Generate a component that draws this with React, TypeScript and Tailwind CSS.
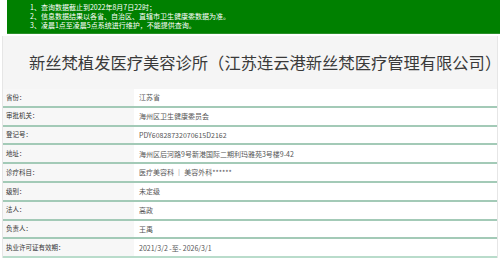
const NOTICES = [
  '1、查询数据截止到2022年8月7日22时；',
  '2、信息数据结果以各省、自治区、直辖市卫生健康委数据为准。',
  '3、凌晨1点至凌晨5点系统进行维护，不能提供查询。',
];

const ROWS = [
  { label: '省份：', value: '江苏省' },
  { label: '审批机关：', value: '海州区卫生健康委员会' },
  { label: '登记号：', value: 'PDY60828732070615D2162' },
  { label: '地址：', value: '海州区后河路9号新港国际二期利玛雅苑3号楼9-42' },
  { label: '诊疗科目：', value: '医疗美容科 ｜ 美容外科******' },
  { label: '级别：', value: '未定级' },
  { label: '法人：', value: '高政' },
  { label: '负责人：', value: '王禹' },
  { label: '执业许可证有效期：', value: '2021/3/2 -至- 2026/3/1' },
];

export default function App() {
  return (
    <div
      className="w-[500px] h-[259px] overflow-hidden bg-white text-[#333]"
      style={{ fontFamily: '"Noto Sans CJK SC", "Noto Sans", sans-serif' }}
    >
      {/* notice banner */}
      <div className="ml-[7px] h-[34px] bg-[#008000] pl-[23px] pt-[3px] border-b border-[#2a8f2a]">
        {NOTICES.map((n) => (
          <p key={n} className="text-[7px] leading-[9px] text-white">{n}</p>
        ))}
      </div>

      <div className="mt-[2px] mx-[2px] border-x border-[#e6e6e6] bg-[#f5f5f5]">
        {/* title */}
        <div className="h-[53px] flex items-center pl-[26px]">
          <h1 className="text-[16.3px] leading-none text-[#3a3a3a] whitespace-nowrap">
            新丝梵植发医疗美容诊所（江苏连云港新丝梵医疗管理有限公司）
          </h1>
        </div>

        {/* info table */}
        <div>
          {ROWS.map((r, i) => (
            <div
              key={r.label}
              className={`flex h-[18.8px] border-b-2 ${i === ROWS.length - 1 ? 'border-[#b9dccb]' : 'border-[#a3cab7]'}`}
            >
              <div className="w-[131px] flex items-center pl-[3px] bg-[#f7f7f7] text-[6.5px] text-[#333]">
                {r.label}
              </div>
              <div className="flex-1 flex items-center pl-[5px] bg-white text-[7px] text-[#555]">
                {r.value}
              </div>
            </div>
          ))}
        </div>
      </div>
    </div>
  );
}
